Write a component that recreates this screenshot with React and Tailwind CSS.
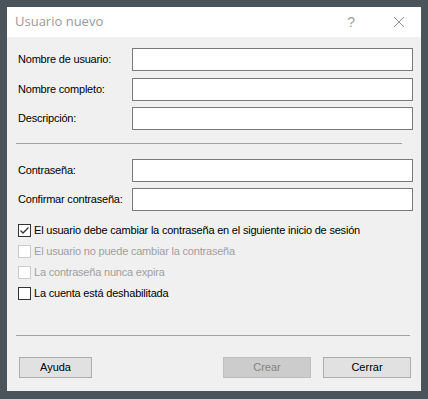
import React from 'react'

const font = { fontFamily: '"Liberation Sans", Arial, sans-serif' }

function Field({ label, className = '' }) {
  return (
    <div className={`flex items-center h-[23px] ${className}`}>
      <span className="w-[114px] shrink-0 whitespace-nowrap text-[11px] tracking-[-0.2px] text-black">{label}</span>
      <div className="flex-1 h-[23px] bg-white border border-[#7a7a7a]" />
    </div>
  )
}

function Check({ label, checked = false, disabled = false }) {
  return (
    <div className="flex items-center h-[21px]">
      <div
        className={`w-[13px] h-[13px] shrink-0 bg-white border flex items-center justify-center ${
          disabled ? 'border-[#cccccc]' : 'border-[#333333]'
        }`}
      >
        {checked && (
          <svg width="11" height="11" viewBox="0 0 11 11">
            <path d="M1.5 5.5 L4 8 L9.5 2.5" fill="none" stroke="#333" strokeWidth="1.3" />
          </svg>
        )}
      </div>
      <span className={`ml-[3px] whitespace-nowrap text-[11px] tracking-[-0.2px] ${disabled ? 'text-[#a0a0a0]' : 'text-black'}`}>
        {label}
      </span>
    </div>
  )
}

export default function App() {
  return (
    <div className="w-[428px] h-[399px] bg-[#4b545b] pt-[7px] px-[7px] pb-[8px]" style={font}>
      <div className="h-full flex flex-col bg-[#f0f0f0]">
        {/* Title bar */}
        <div className="h-[30px] bg-white flex items-center pl-[8px] shrink-0">
          <span className="text-[13px] text-[#999999]" style={{ fontFamily: '"Open Sans", "Liberation Sans", sans-serif' }}>
            Usuario nuevo
          </span>
          <span className="ml-auto text-[14px] text-[#a0a0a0] mr-[38px]">?</span>
          <svg width="12" height="12" viewBox="0 0 12 12" className="mr-[16px]">
            <path d="M1 1 L11 11 M11 1 L1 11" stroke="#909090" strokeWidth="1" />
          </svg>
        </div>

        <div className="flex flex-col pl-[11px] pr-[8px] pt-[11px]">
          <Field label="Nombre de usuario:" />
          <Field label="Nombre completo:" className="mt-[7px]" />
          <Field label="Descripción:" className="mt-[6px]" />

          <div className="mt-[13px] ml-[-2px] mr-[11px] h-[1px] bg-[#a0a0a0]" />

          <Field label="Contraseña:" className="mt-[15px]" />
          <Field label="Confirmar contraseña:" className="mt-[6px]" />

          <div className="mt-[9px] flex flex-col">
            <Check checked label="El usuario debe cambiar la contraseña en el siguiente inicio de sesión" />
            <Check disabled label="El usuario no puede cambiar la contraseña" />
            <Check disabled label="La contraseña nunca expira" />
            <Check label="La cuenta está deshabilitada" />
          </div>

          <div className="mt-[31px] ml-[-2px] mr-[3px] h-[1px] bg-[#a0a0a0]" />

          <div className="mt-[21px] flex items-center pl-[1px] pr-[2px]">
            <button className="w-[73px] h-[21px] bg-[#e1e1e1] border border-[#adadad] text-[11px] text-black">Ayuda</button>
            <button className="ml-auto w-[88px] h-[21px] bg-[#cccccc] border border-[#bfbfbf] text-[11px] text-[#838383]">Crear</button>
            <button className="ml-[12px] w-[88px] h-[21px] bg-[#e1e1e1] border border-[#adadad] text-[11px] text-black">Cerrar</button>
          </div>
        </div>
      </div>
    </div>
  )
}
